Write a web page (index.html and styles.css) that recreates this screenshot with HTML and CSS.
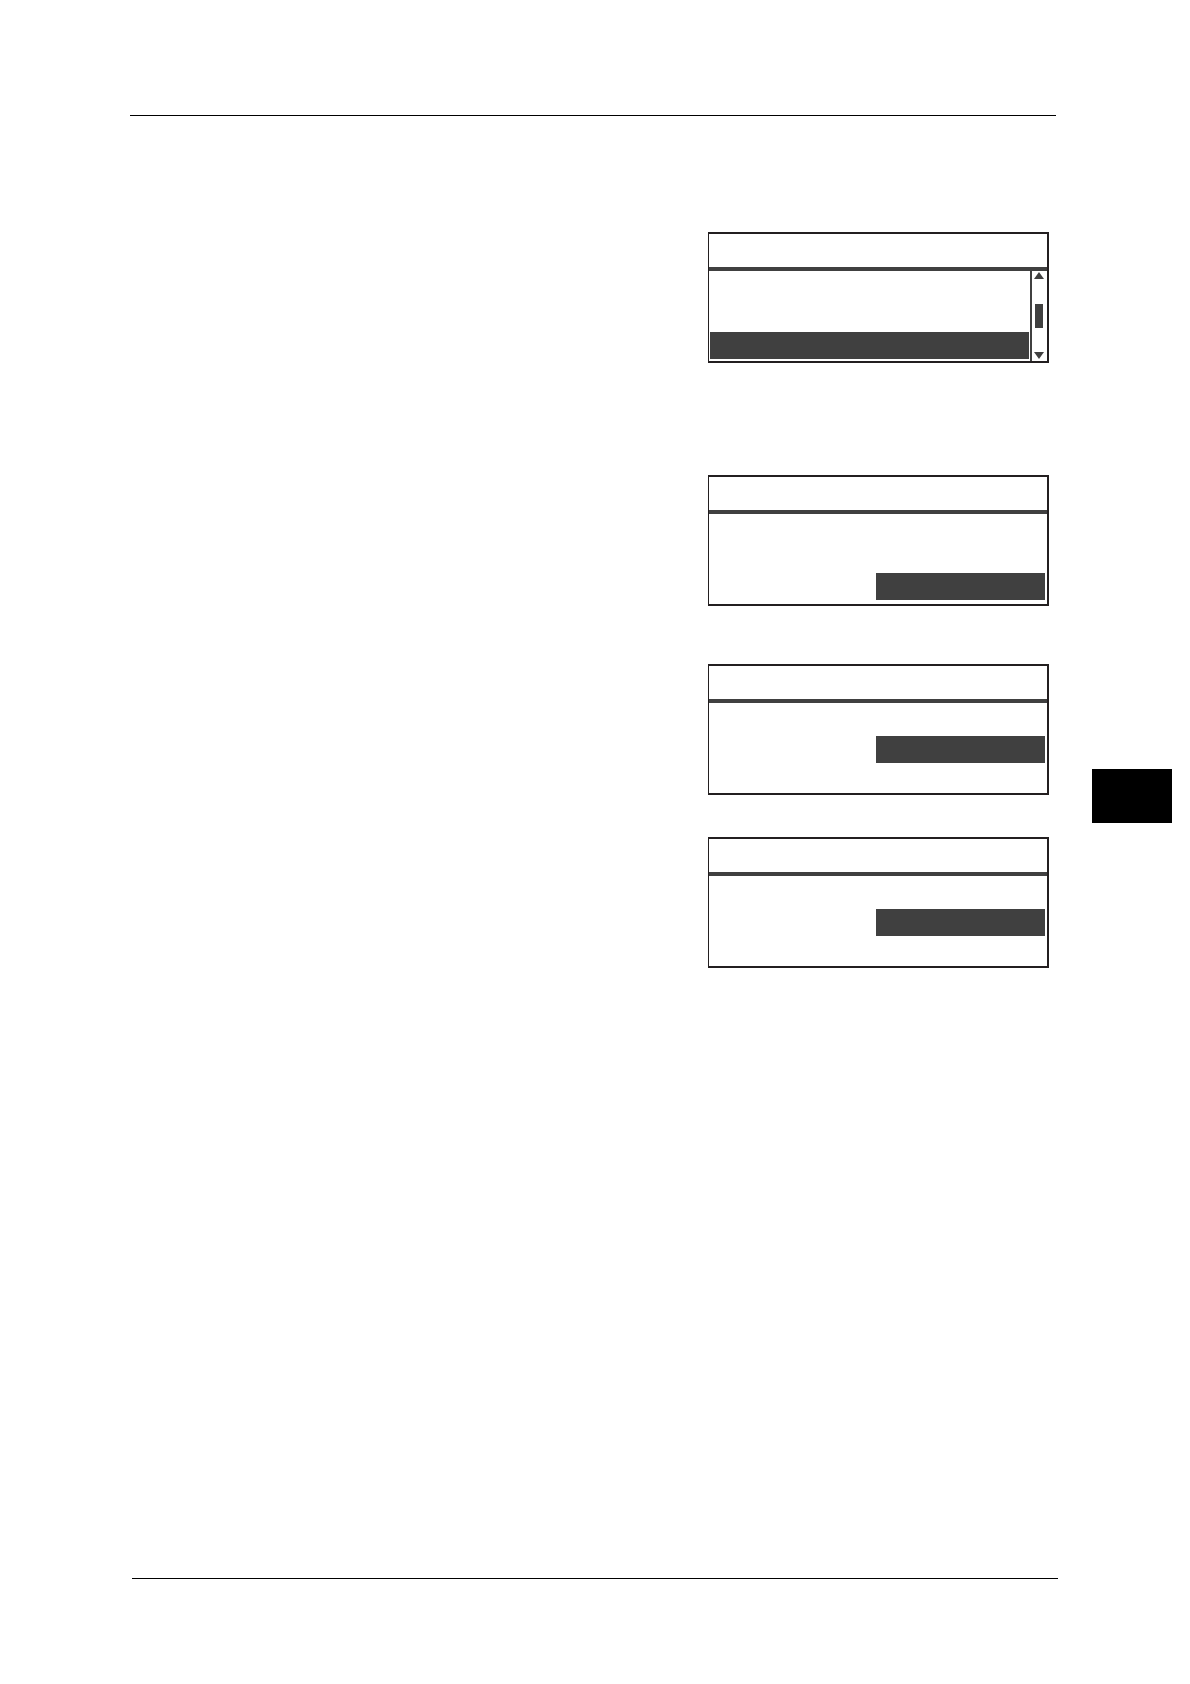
FILE: index.html
```html
<!DOCTYPE html>
<html lang="en">
<head>
<meta charset="UTF-8">
<meta name="viewport" content="width=device-width, initial-scale=1">
<link rel="stylesheet" href="styles.css">
</head>
<body>
  <header class="page-header"></header>

  <main class="content">
    <div class="screens">
      <!-- menu list with scroll bar -->
      <section class="screen menu">
        <div class="screen-title"></div>
        <div class="screen-body">
          <div class="list">
            <div class="selected"></div>
          </div>
          <div class="scroll">
            <svg class="arrow" viewBox="0 0 10 7"><path d="M5 0L10 7H0Z"/></svg>
            <div class="thumb"></div>
            <svg class="arrow" viewBox="0 0 10 7"><path d="M0 0H10L5 7Z"/></svg>
          </div>
        </div>
      </section>

      <section class="screen option-last">
        <div class="screen-title"></div>
        <div class="screen-body">
          <div class="selected"></div>
        </div>
      </section>

      <section class="screen option-middle">
        <div class="screen-title"></div>
        <div class="screen-body">
          <div class="selected"></div>
        </div>
      </section>

      <section class="screen option-middle">
        <div class="screen-title"></div>
        <div class="screen-body">
          <div class="selected"></div>
        </div>
      </section>
    </div>

    <!-- chapter tab on the page edge -->
    <aside class="chapter-tab"></aside>
  </main>

  <footer class="page-footer"></footer>
</body>
</html>
```

FILE: styles.css
```css
* {
  box-sizing: border-box;
}
body {
  margin: 0;
  min-height: 100vh;
  display: flex;
  flex-direction: column;
  background: #fff;
  color: #000;
  font-family: "Liberation Sans", Arial, sans-serif;
}
.page-header {
  height: 116px;
  margin: 0 134px 0 130px;
  border-bottom: 1px solid #000;
}
.page-footer {
  height: 106px;
  margin: 0 132px;
  border-top: 1px solid #000;
}
.content {
  flex: 1;
  display: flex;
  justify-content: flex-end;
  align-items: flex-start;
  gap: 43px;
  padding-right: 18px;
}
.screens {
  flex: 0 1 341px;
  padding: 116px 0 40px;
}
.screen {
  border: 2px solid #231f20;
  border-left-width: 1px;
}
.screen-title {
  height: 37px;
  border-bottom: 4px solid #404040;
}
.screen-body {
  display: flex;
  justify-content: flex-end;
  height: 90px;
}
.selected {
  height: 27px;
  background: #404040;
}

/* menu list */
.menu .list {
  flex: 1;
  display: flex;
  flex-direction: column;
  justify-content: flex-end;
  padding: 0 1px 2px;
}
.scroll {
  width: 17px;
  border-left: 2px solid #404040;
  display: flex;
  flex-direction: column;
  align-items: center;
  justify-content: space-between;
  padding: 1px 1px 2px 0;
}
.arrow {
  width: 10px;
  height: 7px;
  fill: #404040;
}
.thumb {
  width: 8px;
  height: 24px;
  background: #404040;
}

/* screens with one highlighted option on the right */
.option-last {
  margin-top: 112px;
}
.option-middle {
  margin-top: 58px;
}
.option-middle + .option-middle {
  margin-top: 42px;
}
.option-last .screen-body,
.option-middle .screen-body {
  padding-right: 2px;
}
.option-last .selected,
.option-middle .selected {
  width: 169px;
}
.option-last .screen-body {
  align-items: flex-end;
  padding-bottom: 4px;
}
.option-middle .screen-body {
  padding-top: 33px;
}

.chapter-tab {
  width: 80px;
  height: 54px;
  margin-top: 653px;
  background: #000;
}
```
